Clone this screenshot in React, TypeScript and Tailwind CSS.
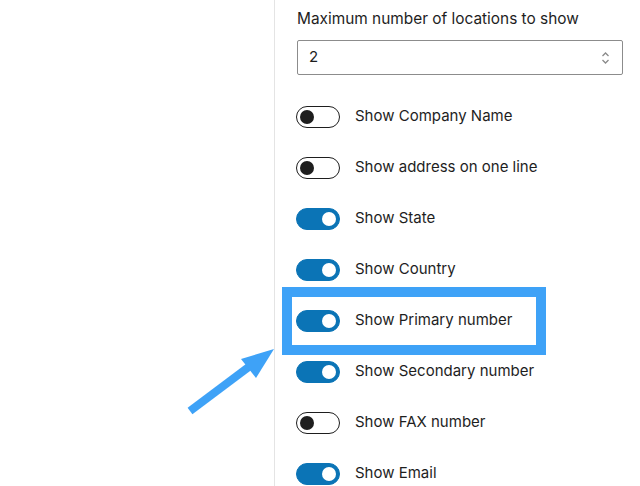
import React, { useState } from 'react';

type Row = { label: string; on: boolean };

const initialRows: Row[] = [
  { label: 'Show Company Name', on: false },
  { label: 'Show address on one line', on: false },
  { label: 'Show State', on: true },
  { label: 'Show Country', on: true },
  { label: 'Show Primary number', on: true },
  { label: 'Show Secondary number', on: true },
  { label: 'Show FAX number', on: false },
  { label: 'Show Email', on: true },
];

const Toggle: React.FC<{ on: boolean; onClick: () => void }> = ({ on, onClick }) => (
  <button
    type="button"
    onClick={onClick}
    className={
      on
        ? 'relative h-[22px] w-[44px] shrink-0 rounded-full bg-[#0b74b6] border border-[#0b74b6]'
        : 'relative h-[22px] w-[44px] shrink-0 rounded-full bg-white border-[1.5px] border-[#1e1e1e]'
    }
  >
    <span
      className={
        on
          ? 'absolute top-1/2 -translate-y-1/2 right-[3px] h-[14px] w-[14px] rounded-full bg-white'
          : 'absolute top-1/2 -translate-y-1/2 left-[3px] h-[14px] w-[14px] rounded-full bg-[#1e1e1e]'
      }
    />
  </button>
);

const App: React.FC = () => {
  const [rows, setRows] = useState(initialRows);
  const [max, setMax] = useState('2');

  return (
    <div
      className="relative flex h-[486px] w-[640px] overflow-hidden bg-white text-[#1e1e1e]"
      style={{ fontFamily: 'Inter, "Noto Sans", sans-serif' }}
    >
      <div className="w-[275px] shrink-0 border-r border-[#e4e4e4]" />

      <div className="flex-1 pl-[21px] pr-[17px] pt-[8px]">
        <label className="block pl-[1px] text-[15.4px] leading-[22px]">Maximum number of locations to show</label>
        <div className="ml-[1px] mt-[10px] flex h-[35px] items-center rounded-[2px] border border-[#8c8c8c] pl-[11px] pr-[12px]">
          <input
            value={max}
            onChange={(e) => setMax(e.target.value)}
            className="flex-1 bg-transparent text-[15px] outline-none"
          />
          <svg width="9" height="14" viewBox="0 0 9 14" fill="none" stroke="#8a8a8a" strokeWidth="1.3">
            <path d="M1.5 5 L4.5 2 L7.5 5" />
            <path d="M1.5 9 L4.5 12 L7.5 9" />
          </svg>
        </div>

        <div className="mt-[16px] flex flex-col">
          {rows.map((r, i) => (
            <div key={r.label} className="flex h-[51px] items-center gap-[15px]">
              <Toggle
                on={r.on}
                onClick={() => setRows(rows.map((x, j) => (j === i ? { ...x, on: !x.on } : x)))}
              />
              <span className="text-[15px]">{r.label}</span>
            </div>
          ))}
        </div>
      </div>

      {/* highlight box */}
      <div className="pointer-events-none absolute left-[282px] top-[287px] h-[68px] w-[264px] border-[10px] border-[#3ea2f7]" />

      {/* arrow */}
      <svg className="pointer-events-none absolute left-0 top-0" width="640" height="486">
        <line x1="190" y1="411" x2="250" y2="366" stroke="#3ea2f7" strokeWidth="8" />
        <polygon points="274,349 241,359 256,378" fill="#3ea2f7" />
      </svg>
    </div>
  );
};

export default App;
